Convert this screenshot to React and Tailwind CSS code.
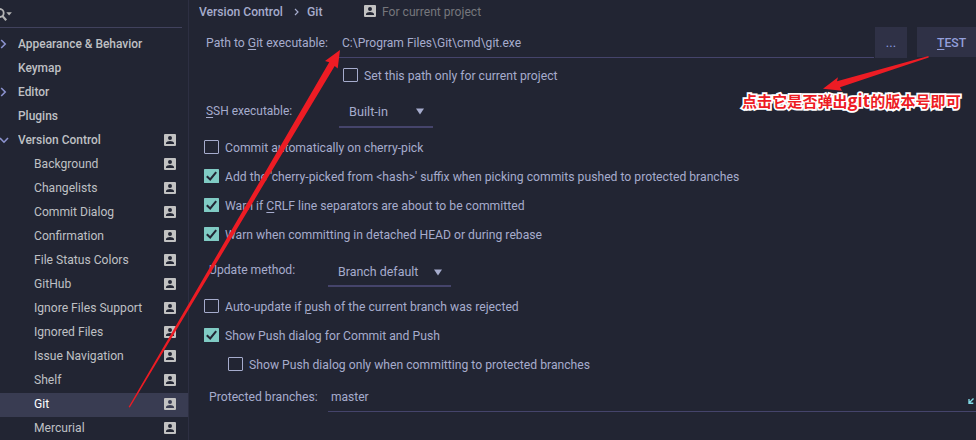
import React from "react";

function ProjectIcon({ className = "" }) {
  return (
    <svg className={"h-3 w-3 shrink-0 " + className} viewBox="0 0 12 12">
      <path
        fill="#c2c2c2"
        fillRule="evenodd"
        d="M1 0h10a1 1 0 0 1 1 1v10a1 1 0 0 1-1 1H1a1 1 0 0 1-1-1V1a1 1 0 0 1 1-1zM6 2a1.9 1.9 0 0 0 0 4a1.9 1.9 0 0 0 0-4zM2 10h8V9C10 7.7 7.5 7 6 7S2 7.7 2 9z"
      />
    </svg>
  );
}

const groups = [
  { label: "Appearance & Behavior", arrow: "right" },
  { label: "Keymap" },
  { label: "Editor", arrow: "right" },
  { label: "Plugins" },
  { label: "Version Control", arrow: "down", icon: true },
];

const children = [
  "Background",
  "Changelists",
  "Commit Dialog",
  "Confirmation",
  "File Status Colors",
  "GitHub",
  "Ignore Files Support",
  "Ignored Files",
  "Issue Navigation",
  "Shelf",
  "Git",
  "Mercurial",
];

function Chevron({ dir }) {
  return (
    <svg className="h-6 w-[18px] shrink-0" viewBox="0 0 18 24" fill="none" stroke="#8c93cf" strokeWidth="1.6">
      {dir === "right" && <path d="M1.2 7l4 4l-4 4" />}
      {dir === "down" && <path d="M0 9l4 4.2l4-4.2" />}
    </svg>
  );
}

function Sidebar() {
  return (
    <aside className="flex h-[440px] w-[189px] shrink-0 flex-col overflow-hidden border-r border-[#2d2f42]">
      <div className="mr-[6px] h-7 shrink-0 border-b border-[#41425d]">
        <svg className="h-7 w-4" viewBox="0 0 16 28" fill="none">
          <circle cx="-0.3" cy="13" r="4" stroke="#b4b4b4" strokeWidth="1.8" />
          <path d="M2.2 15.6L6.2 20.2" stroke="#b4b4b4" strokeWidth="2.2" />
          <path d="M6.3 12.2h5.6L9.1 15.6z" fill="#b4b4b4" />
        </svg>
      </div>
      <nav className="flex flex-col pt-[5px] text-[13px] leading-[22px] text-[#bfc0c4]">
        {groups.map((g) => (
          <div key={g.label} className="flex h-6 shrink-0 font-medium">
            <Chevron dir={g.arrow} />
            <span className="flex-1 origin-left scale-x-[0.919] whitespace-nowrap">{g.label}</span>
            {g.icon && <ProjectIcon className="mt-[5px] mr-3" />}
          </div>
        ))}
        {children.map((c) => (
          <div
            key={c}
            className={c === "Git" ? "flex h-6 shrink-0 bg-[#393c52] pl-[34px] text-white" : "flex h-6 shrink-0 pl-[34px]"}
          >
            <span className="flex-1 origin-left scale-x-[0.932] whitespace-nowrap">{c}</span>
            <ProjectIcon className="mt-[5px] mr-3" />
          </div>
        ))}
      </nav>
    </aside>
  );
}

function T({ className = "scale-x-[0.938]", children }) {
  return <span className={"inline-block origin-left whitespace-nowrap " + className}>{children}</span>;
}

function Check({ on, className = "", children }) {
  return (
    <div className={"flex h-[14px] items-center gap-[6px] leading-[14px] " + className}>
      {on ? (
        <svg className="h-[14px] w-[15px] shrink-0" viewBox="0 0 15 14" fill="none">
          <rect width="15" height="14" rx="0.6" fill="#80cbc4" />
          <path d="M2.8 7.2l3.4 3.3l6-7.4" stroke="#222533" strokeWidth="2" />
        </svg>
      ) : (
        <span className="h-[14px] w-[15px] shrink-0 rounded-[1px] border border-[#a6accd]" />
      )}
      <T className="scale-x-[0.937] pt-[2px]">{children}</T>
    </div>
  );
}

function U({ children }) {
  return <span className="underline decoration-1 underline-offset-2">{children}</span>;
}

function Caret() {
  return (
    <svg className="h-[7px] w-2 shrink-0" viewBox="0 0 8 7">
      <path d="M0 0.5h8L4 6.5z" fill="#a6accd" />
    </svg>
  );
}

function Main() {
  return (
    <main className="flex h-[440px] min-w-0 flex-1 flex-col text-[13px] text-[#a6accd]">
      <header className="flex h-6 shrink-0 items-center pl-[10px] leading-6">
        <T className="w-[95px] scale-x-[0.932] font-medium">Version Control</T>
        <svg className="mr-[8px] h-2 w-[5px]" viewBox="0 0 5 8" fill="none" stroke="#a6accd" strokeWidth="1.2">
          <path d="M1 1l3 3l-3 3" />
        </svg>
        <T className="w-[57px] scale-x-[0.938] font-medium">Git</T>
        <ProjectIcon className="mr-[6px] -mt-[2px]" />
        <T className="scale-x-[0.932] text-[#76777c]">For current project</T>
      </header>

      <div className="mt-[3px] flex h-[31px] shrink-0 pl-[17px] leading-[32px]">
        <T className="w-[133px] scale-x-[0.938]">
          Path to <U>G</U>it executable:
        </T>
        <div className="h-[31px] w-[535px] border-b border-[#45446b] pl-[3px]">
          <T className="scale-x-[0.927]">C:\Program Files\Git\cmd\git.exe</T>
        </div>
        <button className="ml-px h-[31px] w-8 bg-[#2f3146] text-[#8c9be0]">...</button>
        <button className="ml-[10px] h-[30px] flex-1 bg-[#2f3146] pl-[11px] font-medium text-[#939fdb]">
          <span className="inline-block scale-x-[0.938]">
            <U>T</U>EST
          </span>
        </button>
      </div>

      <Check className="mt-[10px] ml-[154px]">Set this path only for current project</Check>

      <div className="mt-[14px] flex h-[32px] shrink-0 pl-[17px]">
        <T className="w-[133px] scale-x-[0.918] leading-[30px]">
          <U>S</U>SH executable:
        </T>
        <div className="flex h-[32px] w-[94px] items-center justify-between border-b-2 border-[#45446b] pt-px pr-[9px] pl-[10px]">
          <T className="scale-x-[0.98]">Built-in</T>
          <Caret />
        </div>
      </div>

      <div className="mt-[12px] flex flex-col gap-[15px] pl-[15px]">
        <Check>Commit automatically on cherry-pick</Check>
        <Check on>Add the 'cherry-picked from &lt;hash&gt;' suffix when picking commits pushed to protected branches</Check>
        <Check on>
          Warn if <U>C</U>RLF line separators are about to be committed
        </Check>
        <Check on>Warn when committing in detached HEAD or during rebase</Check>
      </div>

      <div className="mt-[18px] flex h-[28px] shrink-0 pl-5">
        <T className="w-[119px] scale-x-[0.935] leading-[22px]">Update method:</T>
        <div className="flex h-[28px] w-[123px] items-center justify-between border-b-2 border-[#45446b] pr-[9px] pl-[10px]">
          <T className="scale-x-[0.955]">Branch default</T>
          <Caret />
        </div>
      </div>

      <div className="mt-[12px] flex flex-col gap-[15px] pl-[15px]">
        <Check>
          Auto-update if <U>p</U>ush of the current branch was rejected
        </Check>
        <Check on>Show Push dialog for Commit and Push</Check>
        <Check className="ml-6">Show Push dialog only when committing to protected branches</Check>
      </div>

      <div className="mt-[13px] flex h-[28px] shrink-0 pl-5 leading-[26px]">
        <T className="w-[119px] scale-x-[0.938]">Protected branches:</T>
        <div className="flex flex-1 justify-between border-b border-[#45446b] pr-[2px] pl-[3px]">
          <T className="scale-x-[0.925]">master</T>
          <svg className="mt-[14px] h-[6px] w-[6px]" viewBox="0 0 6 6" fill="none" stroke="#80d8e4" strokeWidth="1.4">
            <path d="M5.5 0.5L1 5M1 1v4.3h4.3" />
          </svg>
        </div>
      </div>
    </main>
  );
}

export default function App() {
  return (
    <div
      lang="zh-CN"
      className="relative flex h-[440px] w-[976px] overflow-hidden bg-[#222533] font-['Roboto','Noto_Sans_CJK_SC',sans-serif]"
    >
      <Sidebar />
      <Main />
      <svg className="pointer-events-none absolute inset-0" width="976" height="440" fill="#ed1c24">
        <path d="M128.6 407L329.2 62.3L325 61L340 50L337.7 68.5L334.7 66L129.8 407.5z" />
        <path d="M928.5 56L837 81.3L838 77.3L823 88.7L842 90.7L840 87.3L928.7 57.6z" />
      </svg>
      <div className="absolute top-[90px] left-[742px] font-['Noto_Sans_CJK_SC',sans-serif] text-[15px] leading-[22px] font-bold tracking-[0.1px] whitespace-nowrap text-[#ed1c24] [-webkit-text-stroke:3.5px_white] [paint-order:stroke_fill]">
        点击它是否弹出
        <span className="font-['Open_Sans',sans-serif] text-[17px]">git</span>
        的版本号即可
      </div>
    </div>
  );
}
